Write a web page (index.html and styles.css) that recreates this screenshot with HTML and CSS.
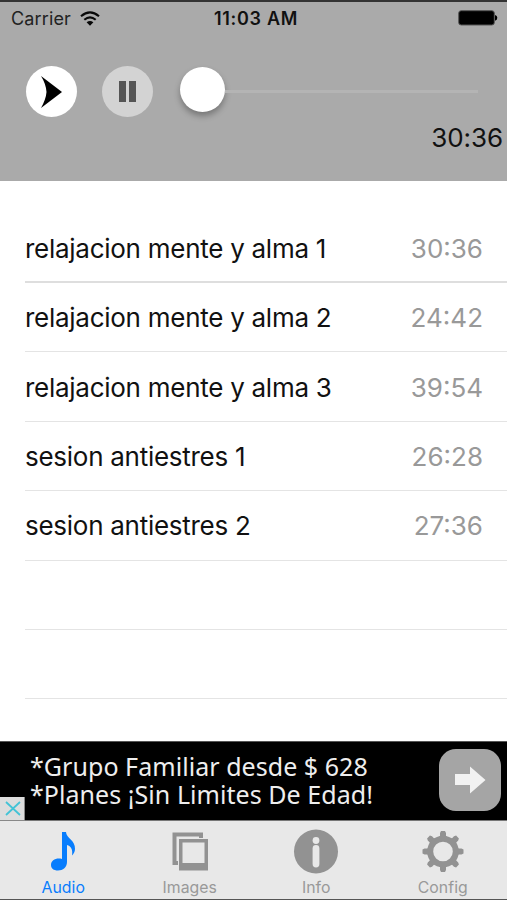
FILE: index.html
```html
<!DOCTYPE html>
<html lang="es">
<head>
<meta charset="utf-8">
<title>Audio</title>
<link rel="stylesheet" href="styles.css">
</head>
<body>
<main class="app">
  <header class="player">
    <div class="status">
      <div class="carrier">Carrier
        <svg class="wifi" viewBox="0 0 20 15"><g fill="none" stroke="#080808" stroke-width="2.1"><path d="M1 5.300Q10 -2.400 19 5.300"/><path d="M4.300 8.800Q10 4 15.700 8.800"/></g><path d="M6.600 11.200Q10 8.600 13.400 11.200L10 14.700Z" fill="#080808"/></svg>
      </div>
      <div class="clock">11:03 AM</div>
      <svg class="battery" viewBox="0 0 40 16"><rect x=".7" y=".7" width="35.600" height="14.300" rx="2.500" fill="#000" stroke="#555" stroke-width="1"/><path d="M37 5q2.300 .5 2.300 2.800T37 10.700Z"/></svg>
    </div>
    <div class="controls">
      <button class="round play" aria-label="Play"><svg viewBox="0 0 51 51"><path d="M15 10L36 26L15 42Q20 33 20.500 26Q20 18 15 10Z"/></svg></button>
      <button class="round pause" aria-label="Pause"><svg viewBox="0 0 51 51"><path d="M17 15h7v21h-7zM27 15h7v21h-7z" fill="#555"/></svg></button>
      <div class="slider"><span class="knob"></span><span class="track"></span></div>
    </div>
    <div class="remaining">30:36</div>
  </header>
  <ul class="list">
    <li class="row"><span class="name">relajacion mente y alma 1</span><span class="time">30:36</span></li>
    <li class="row"><span class="name">relajacion mente y alma 2</span><span class="time">24:42</span></li>
    <li class="row"><span class="name">relajacion mente y alma 3</span><span class="time">39:54</span></li>
    <li class="row"><span class="name">sesion antiestres 1</span><span class="time">26:28</span></li>
    <li class="row"><span class="name">sesion antiestres 2</span><span class="time">27:36</span></li>
    <li class="row"></li>
    <li class="row"></li>
  </ul>
  <section class="ad">
    <div class="copy"><div>*Grupo Familiar desde $ 628</div><div>*Planes ¡Sin Limites De Edad!</div></div>
    <div class="go"><svg viewBox="0 0 62 62"><path d="M16 25h15v-7.500L46.500 31L31 44.500V36H16Z" fill="#f2f2f2"/></svg></div>
    <div class="close"><svg viewBox="0 0 25 24"><path d="M6 5L20 18M20 5L6 18" stroke="#43c3d6" stroke-width="1.800"/></svg></div>
  </section>
  <nav class="tabs">
    <a class="tab active"><svg viewBox="0 0 50 50"><path d="M24 6h4c0 6 9.500 8 9 17c0 3-1.500 5-3 6.500c1-6-1-9.500-5-10.500V36c0 5-4 8.500-9 8.500c-4.500 0-7-2.200-7-5.500c0-4.500 5-7.500 11-6Z" fill="#087dfd"/></svg><span>Audio</span></a>
    <a class="tab"><svg viewBox="0 0 50 50"><path d="M13 37H9.500V8.500H36V12" fill="none" stroke="#929292" stroke-width="4"/><path d="M14 13H43v31.500H14ZM17.500 16.500v20.500H39.500V16.500Z" fill="#929292" fill-rule="evenodd"/></svg><span>Images</span></a>
    <a class="tab"><svg viewBox="0 0 50 50"><circle cx="25" cy="25.500" r="22" fill="#929292"/><circle cx="25" cy="14.500" r="3.400" fill="#e8e8e8"/><rect x="21.600" y="19" width="6.800" height="22.500" rx="3.400" fill="#e8e8e8"/></svg><span>Info</span></a>
    <a class="tab"><svg viewBox="0 0 50 50"><g fill="#929292"><g id="teeth"><path id="tooth" d="M23 5h4l1 2v3l3 3h-12l3-3v-3zM23 46h4l1-2v-3l3-3h-12l3 3v3z"/><use href="#tooth" transform="rotate(90 25 25.500)"/></g><use href="#teeth" transform="rotate(45 25 25.500)"/></g><circle cx="25" cy="25.500" r="12.800" fill="none" stroke="#929292" stroke-width="6"/></svg><span>Config</span></a>
  </nav>
</main>
</body>
</html>
```
FILE: styles.css
```css
* { box-sizing: border-box; }
body { margin: 0; background: #fff; font-family: Inter, "Liberation Sans", sans-serif; color: #111; }
.app { width: 507px; height: 900px; display: flex; flex-direction: column; overflow: hidden; border-bottom: 1px solid #555; }
.player { height: 181px; flex: none; background: #aaa; border-top: 2px solid #333; }
.status { height: 32px; padding: 0 9px 0 11px; display: grid; grid-template-columns: 1fr auto 1fr; align-items: center; font-size: 18px; }
.carrier { display: flex; align-items: center; gap: 9px; letter-spacing: .15px; color: #222; }
.wifi { width: 20px; height: 15px; }
.clock { font-weight: 600; font-size: 18px; letter-spacing: .7px; padding-left: 3px; }
.battery { width: 40px; height: 16px; justify-self: end; }
.controls { display: flex; align-items: center; margin-top: 32px; padding-left: 26px; }
.round { width: 51px; height: 51px; padding: 0; border: 0; border-radius: 50%; background: #fff; }
.round svg { display: block; width: 51px; height: 51px; }
.pause { margin-left: 25px; background: #d3d3d3; }
.slider { display: flex; align-items: center; margin-left: 27px; width: 298px; }
.knob { width: 45px; height: 45px; margin-top: -4px; border-radius: 50%; background: #fff; box-shadow: 0 4px 6px rgba(0,0,0,.3); }
.track { flex: 1; height: 3px; background: #b4b4b4; }
.remaining { text-align: right; margin: 4px 4px 0 0; font-size: 26px; line-height: 34px; letter-spacing: -.1px; }
.list { list-style: none; margin: 0; padding: 32.600px 0 0; flex: 1; }
.row { height: 69.400px; margin-left: 25px; padding: 1px 24px 0 0; display: flex; align-items: center; justify-content: space-between; border-bottom: 1.500px solid #e4e4e4; font-size: 26px; }
.row:first-child { border-bottom: 2px solid #dedede; padding-top: 2px; }
.name { letter-spacing: -.27px; }
.time { color: #999; }
.ad { position: relative; flex: none; height: 80px; background: #000; border-top: 1px solid #555; border-bottom: 1px solid #777; display: flex; align-items: center; justify-content: space-between; padding: 0 6px 2px 30px; }
.copy { color: #eee; font: 25px/28px "Noto Sans", sans-serif; letter-spacing: .05px; white-space: nowrap; }
.go { width: 62px; height: 62px; background: #a5a5a5; border-radius: 17px; }
.go svg { display: block; }
.close { position: absolute; left: 0; bottom: -1px; width: 25px; height: 24px; background: #ddd; border-right: 1px solid #888; border-bottom: 1px solid #888; }
.close svg { display: block; width: 25px; height: 24px; }
.tabs { flex: none; height: 78px; background: #e8e8e8; display: grid; grid-template-columns: repeat(4, 1fr); padding-right: 1px; }
.tab { display: flex; flex-direction: column; align-items: center; padding-top: 5px; color: #999; font-size: 15.800px; line-height: 20px; letter-spacing: .05px; }
.tab svg { width: 50px; height: 50px; }
.tab span { margin-top: 2px; }
.active { color: #087dfd; }
```
